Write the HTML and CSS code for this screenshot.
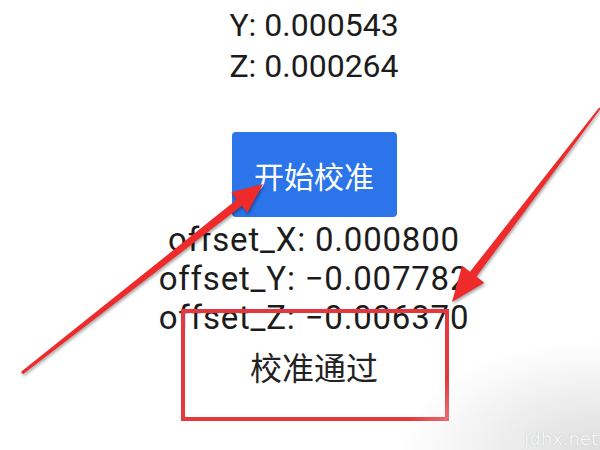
FILE: index.html
```html
<!DOCTYPE html>
<html lang="zh">
<head>
<meta charset="utf-8">
<link rel="stylesheet" href="styles.css">
</head>
<body>
<main class="screen">
  <div class="readings">
    <div class="reading">Y: 0.000543</div>
    <div class="reading">Z: 0.000264</div>
  </div>
  <button class="calibrate">开始校准</button>
  <div class="offsets">
    <div class="offset">offset_X: 0.000800</div>
    <div class="offset">offset_Y: −0.007782</div>
    <div class="offset">offset_Z: −0.006370</div>
  </div>
  <div class="status">校准通过</div>

  <svg class="annotations" width="600" height="450" viewBox="0 0 600 450">
    <rect x="183" y="311" width="264" height="108" fill="none" stroke="#e6383c" stroke-width="4"/>
    <g class="arrow">
      <polygon points="21.1,371.8 236.9,199.4 231.4,192.3 263,184 247.4,212.7 241.9,205.7 22.9,374.2" fill="#ee2a2a"/>
      <polygon points="599.2,107.4 470.0,271.8 462.1,265.7 452,302 484.3,282.7 476.4,276.6 600.8,108.6" fill="#ee2a2a"/>
    </g>
  </svg>
  <div class="watermark">jdhx.net</div>
</main>
</body>
</html>
```

FILE: styles.css
```css
html, body {
  margin: 0;
  padding: 0;
  background: #ffffff;
}

.screen {
  position: relative;
  width: 600px;
  height: 450px;
  overflow: hidden;
  display: flex;
  flex-direction: column;
  align-items: center;
  padding-left: 28px;
  box-sizing: border-box;
}

.readings {
  padding-top: 5px;
  font-family: Roboto, "Liberation Sans", sans-serif;
  font-size: 32px;
  line-height: 41px;
  color: #1c1c1c;
  text-align: center;
}

.calibrate {
  margin-top: 45px;
  width: 165px;
  height: 85px;
  border: none;
  border-radius: 4px;
  background: #2b74e9;
  color: #ffffff;
  font-family: "Noto Sans CJK SC", "Noto Sans", sans-serif;
  font-size: 30px;
  display: flex;
  align-items: center;
  justify-content: center;
  padding: 0;
}

.offsets {
  margin-top: 3px;
  font-family: Roboto, "Open Sans", sans-serif;
  font-size: 33px;
  letter-spacing: 0.8px;
  line-height: 39px;
  color: #1c1c1c;
  text-align: center;
  white-space: nowrap;
}

.status {
  margin-top: 9px;
  font-family: "Noto Sans CJK SC", sans-serif;
  font-size: 32px;
  line-height: 40px;
  color: #222222;
}

.annotations {
  position: absolute;
  left: 0;
  top: 0;
  pointer-events: none;
}

.arrow {
  filter: drop-shadow(1px 2px 1.5px rgba(0, 0, 0, 0.35));
}

.watermark {
  position: absolute;
  right: 0;
  bottom: 0;
  width: 200px;
  height: 110px;
  box-sizing: border-box;
  padding: 0 2px 1px 0;
  display: flex;
  align-items: flex-end;
  justify-content: flex-end;
  background: radial-gradient(ellipse 100% 100% at 100% 100%, #dedede 0%, #e9e9e9 35%, rgba(255,255,255,0) 100%);
  font-family: "DejaVu Sans", sans-serif;
  font-size: 18px;
  color: #f6f6f6;
  text-shadow: 0 0 1px #b4b4b4;
}
```
